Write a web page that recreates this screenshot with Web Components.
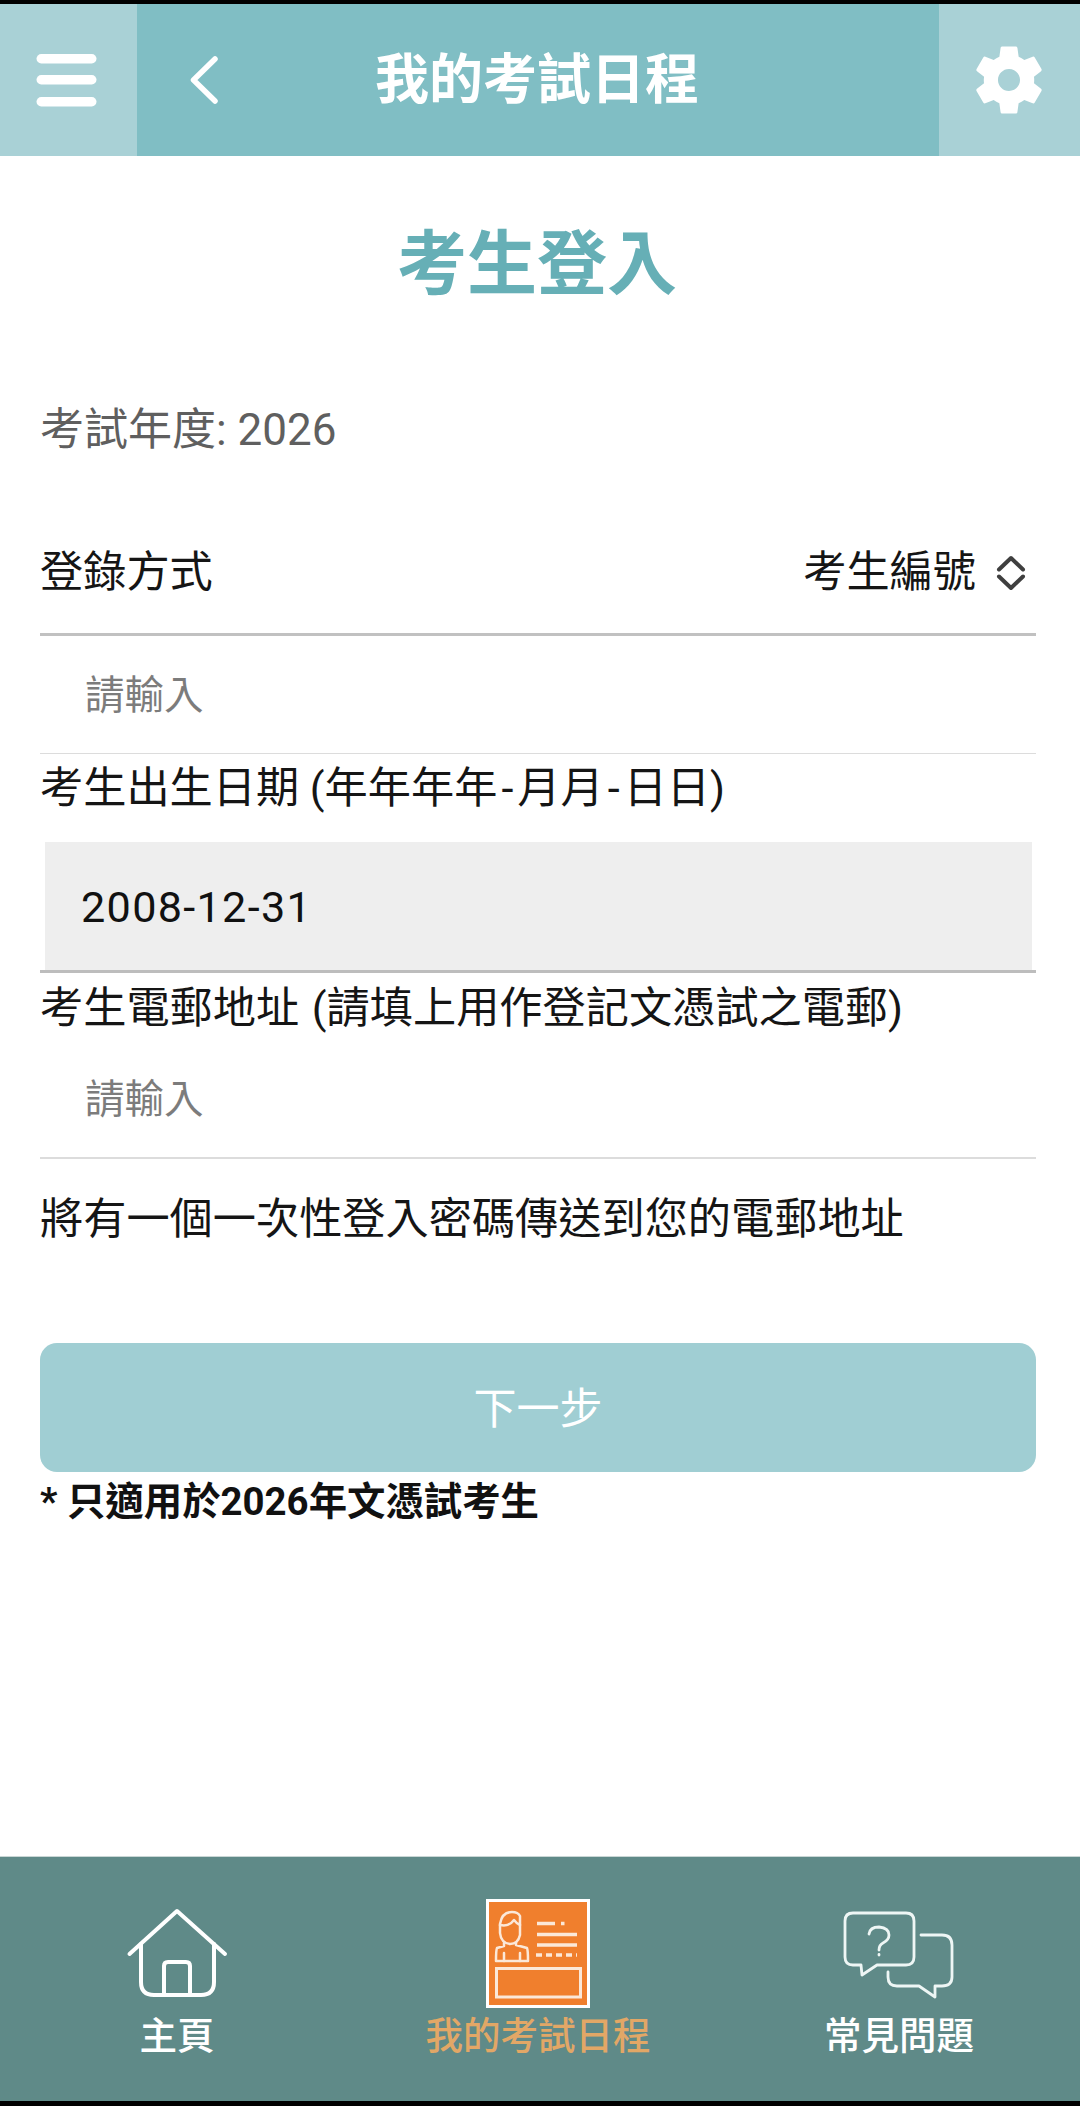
<!DOCTYPE html>
<html lang="zh-Hant"><head><meta charset="utf-8"><title>考生登入</title>
<style>
html,body{margin:0;padding:0;background:#000}
body{width:1080px;height:2106px;overflow:hidden;font-family:Roboto,"Noto Sans CJK TC",sans-serif}
app-shell{--cjk:Roboto,"Noto Sans CJK TC",sans-serif}
</style></head><body>
<app-shell>
  <app-header slot="header" title-text="我的考試日程"></app-header>
  <login-form></login-form>
  <tab-bar slot="footer"></tab-bar>
</app-shell>
<script>
function def(name, html){
  customElements.define(name, class extends HTMLElement{
    constructor(){super();const r=this.attachShadow({mode:'open'});r.innerHTML=typeof html==='function'?html(this):html;}
    connectedCallback(){
      if(typeof html==='function'){this.shadowRoot.innerHTML=html(this);}
    }
  });
}
def('app-shell',`<style>
:host{display:flex;flex-direction:column;width:1080px;height:2106px;background:#fff;box-sizing:border-box;border-top:4px solid #000;border-bottom:5px solid #000;overflow:hidden}
.main{flex:1;min-height:0}
</style><slot name="header"></slot><div class="main"><slot></slot></div><slot name="footer"></slot>`);

def('app-header',h=>`<style>
:host{display:grid;grid-template-columns:137px 1fr 141px;height:152px;background:#80bec4;color:#fff}
.side{background:#a9d1d6;display:flex;align-items:center;justify-content:center}
.mid{position:relative;display:flex;align-items:center;justify-content:center}
.back{position:absolute;left:52px;top:52px;display:block}
h2{margin:0;font:700 54px/1 var(--cjk);position:relative;left:-1px;top:1px}
svg{display:block}
.gear{margin-left:-2px}
</style>
<div class="side"><svg width="137" height="152" viewBox="0 0 137 152"><g fill="#fff"><rect x="36.500" y="50" width="60" height="9.500" rx="4.750"/><rect x="36.500" y="71" width="60" height="9.500" rx="4.750"/><rect x="36.500" y="93" width="60" height="9.500" rx="4.750"/></g></svg></div>
<div class="mid"><svg class="back" width="30" height="48" viewBox="0 0 30 48" fill="none" stroke="#fff" stroke-width="5.500" stroke-linecap="round" stroke-linejoin="round"><path d="M26 3 L4.500 24 L26 45"/></svg><h2>${h.getAttribute('title-text')}</h2></div>
<div class="side"><svg class="gear" width="84" height="84" viewBox="0 0 24 24" fill="#fff"><path d="M19.14 12.94c.04-.3.06-.61.06-.94 0-.32-.02-.64-.07-.94l2.03-1.58c.18-.14.23-.41.12-.61l-1.92-3.32c-.12-.22-.37-.29-.59-.22l-2.39.96c-.5-.38-1.03-.7-1.62-.94l-.36-2.54c-.04-.24-.24-.41-.48-.41h-3.84c-.24 0-.43.17-.47.41l-.36 2.54c-.59.24-1.13.57-1.62.94l-2.39-.96c-.22-.08-.47 0-.59.22L2.740 8.870c-.12.21-.08.47.12.61l2.03 1.58c-.05.3-.09.63-.09.94s.02.64.07.94l-2.03 1.58c-.18.14-.23.41-.12.61l1.92 3.32c.12.22.37.29.59.22l2.39-.96c.5.38 1.03.7 1.62.94l.36 2.54c.05.24.24.41.48.41h3.84c.24 0 .44-.17.47-.41l.36-2.54c.59-.24 1.13-.56 1.62-.94l2.39.96c.22.08.47 0 .59-.22l1.92-3.32c.12-.22.07-.47-.12-.61l-2.01-1.58zM12 15.150c-1.74 0-3.15-1.41-3.15-3.15s1.41-3.15 3.15-3.15 3.15 1.41 3.15 3.15-1.41 3.15-3.15 3.15z"/></svg></div>`);

def('text-line',`<style>
:host{display:flex;align-items:center;box-sizing:border-box;padding-top:4px;font:400 var(--fs,43.200px)/1 var(--cjk);color:var(--c,#151515);height:var(--h,64px);white-space:pre;word-spacing:var(--ws,0)}
</style><span><slot></slot></span>`);

def('text-field',`<style>
:host{display:flex;align-items:center;box-sizing:border-box;height:var(--h,118px);padding:2px 0 0 45px;border-bottom:var(--b,1px) solid #dcdcdc;font:400 39.500px/1 var(--cjk);color:#7c7c7c}
</style><slot></slot>`);

def('select-row',`<style>
:host{display:flex;align-items:center;justify-content:space-between;box-sizing:border-box;height:154px;padding-top:31px;border-bottom:3px solid #c1c1c1;font:400 43.200px/1 var(--cjk);color:#151515}
.v{display:flex;align-items:center;gap:20px}
svg{display:block;margin-right:10px}
</style><slot></slot><span class="v"><slot name="value"></slot><svg width="30" height="36" viewBox="0 0 30 36" fill="none" stroke="#3f3f3f" stroke-width="4" stroke-linecap="round" stroke-linejoin="round"><path d="M3 14.500 L15 3 L27 14.500"/><path d="M3 21.500 L15 33 L27 21.500"/></svg></span>`);

def('date-field',`<style>
:host{display:block;margin-top:23px;border-bottom:3px solid #bdbdbd}
.box{margin:0 4px 0 5px;height:128px;background:#eeeeee;display:flex;align-items:center;padding:4px 0 0 36px;box-sizing:border-box;font:400 43.200px/1 var(--cjk);color:#111;letter-spacing:1.300px}
</style><div class="box"><slot></slot></div>`);

def('primary-button',`<style>
:host{display:flex;align-items:center;justify-content:center;box-sizing:border-box;margin-top:66px;height:129px;padding-top:3px;border-radius:17px;background:#a0ced3;color:#fff;font:400 43px/1 var(--cjk)}
</style><slot></slot>`);

def('login-form',`<style>
:host{display:block;padding:0 44px 0 40px}
h1{margin:0;height:218px;display:flex;align-items:center;justify-content:center;font:700 70px/1 var(--cjk);color:#66afb6;padding-right:2px;box-sizing:border-box}
.year{--h:108px;--c:#5f5f5f;--fs:44px}
.note{--h:56px;--fs:38.400px;font-weight:700;color:#111}
b{font-weight:700}
i{font-style:normal;margin:0 4px}
</style>
<h1>考生登入</h1>
<text-line class="year">考試年度: 2026</text-line>
<select-row>登錄方式<span slot="value">考生編號</span></select-row>
<text-field style="--h:118px">請輸入</text-field>
<text-line style="--h:65px">考生出生日期 (年年年年<i>-</i>月月<i>-</i>日日)</text-line>
<date-field>2008-12-31</date-field>
<text-line style="--h:67px;--ws:2px">考生電郵地址 (請填上用作登記文憑試之電郵)</text-line>
<text-field style="--h:119px;--b:2px">請輸入</text-field>
<text-line style="--h:118px">將有一個一次性登入密碼傳送到您的電郵地址</text-line>
<primary-button>下一步</primary-button>
<text-line class="note"><b>* 只適用於2026年文憑試考生</b></text-line>`);

def('tab-item',`<style>
:host{display:flex;flex-direction:column;align-items:center;color:var(--tc,#fff);font:500 37.500px/1 var(--cjk)}
.ic{height:150px;display:flex;align-items:flex-end}
.t{height:60px;display:flex;align-items:center}
</style><div class="ic"><slot name="icon"></slot></div><div class="t"><slot></slot></div>`);

def('tab-bar',`<style>
:host{display:grid;grid-template-columns:354px 368px 354px;box-sizing:border-box;height:245px;background:#5f8a88;border-top:1px solid #c9d6d5}
svg{display:block}
</style>
<tab-item><svg slot="icon" width="150" height="110" viewBox="0 0 150 110" fill="none" stroke="#fff" stroke-width="4" stroke-linecap="round" stroke-linejoin="round" style="margin-bottom:7px;transform:translateX(-1px)"><path d="M28.500 64 L76 21 L124 64"/><path d="M40 54 V92 Q40 105 53 105 H100 Q113 105 113 92 V54"/><path d="M63 105 V76 Q63 72 67 72 H85 Q89 72 89 76 V105"/></svg>主頁</tab-item>
<tab-item style="--tc:#e2a766"><svg slot="icon" width="104" height="109" viewBox="26 19 104 109" style="margin-bottom:-1px"><rect x="27.500" y="20.500" width="101" height="106" fill="#f07f2d" stroke="#fff" stroke-width="3"/><g fill="none" stroke="#fbe8d8" stroke-width="2.500" stroke-linecap="round" stroke-linejoin="round"><path d="M40 44 Q42 32 52 32 Q58 32 60 36 V55 Q58 64 50 64 Q41 63 40 53 Z"/><path d="M40 45 Q49 47 54 40 Q57 44 60 45"/><path d="M44 63 V66 L37 68 Q36 70 36 81 H68 Q68 70 67 68 L56 65 V63"/><path d="M44 73 V81 M60 73 V81"/></g><g stroke="#fbe8d8" stroke-width="3.500" fill="none"><path d="M77 43.500 H95 M101 43.500 H104.500 M77 54.500 H117 M77 65 H117"/><path d="M76 75 H117" stroke-dasharray="6 4"/></g><rect x="36.500" y="88.500" width="84" height="28.500" fill="none" stroke="#fbe8d8" stroke-width="3"/></svg>我的考試日程</tab-item>
<tab-item><svg slot="icon" width="150" height="110" viewBox="0 0 150 110" fill="none" stroke="#eef6f5" stroke-width="2.800" stroke-linecap="round" stroke-linejoin="round" style="margin-bottom:0;transform:translateX(5px)"><path d="M24 16 H77 Q85 16 85 24 V60 Q85 68 77 68 H48 L33 78 L32 68 H24 Q16 68 16 60 V24 Q16 16 24 16 Z"/><path d="M92 38 H113 Q123 38 123 48 V80 Q123 89 113 89 H106 L106 100 L90 89 H68 Q59 89 59 80 V75"/><path d="M40 37 Q41 30 50 30 Q60 31 60 38 Q60 43 54 46 Q50 48 50 53"/><path d="M50 57.500 V58"/></svg>常見問題</tab-item>`);
</script>
</body></html>
